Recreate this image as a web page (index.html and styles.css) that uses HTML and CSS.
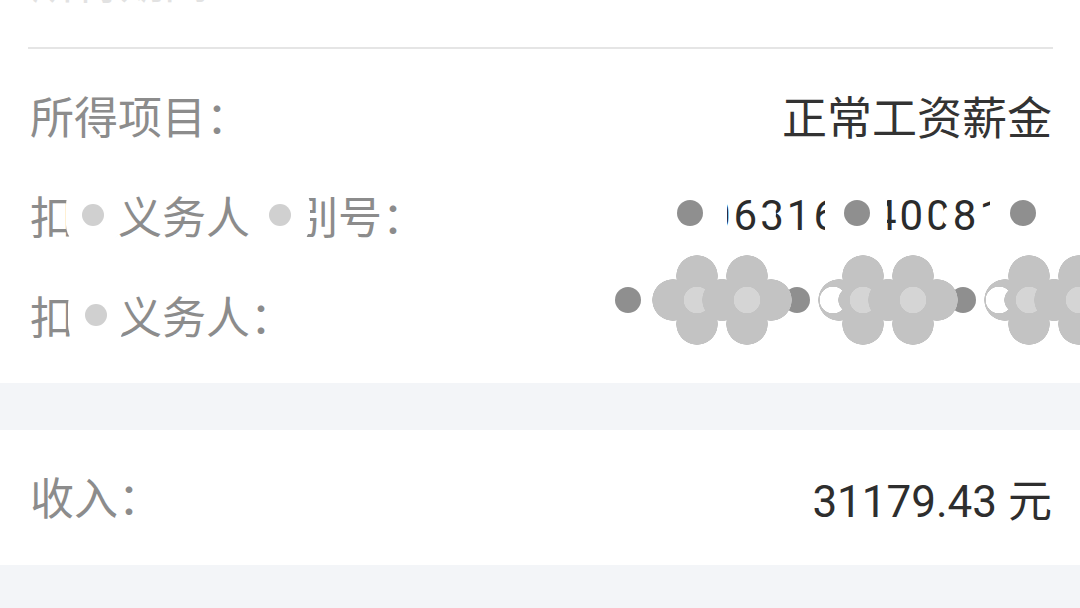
FILE: index.html
```html
<!DOCTYPE html>
<html lang="zh-CN">
<head>
  <meta charset="utf-8">
  <title>收入纳税明细</title>
  <link rel="stylesheet" href="styles.css">
</head>
<body>
  <div class="card">
    <div class="head-cut"><span>所得期间　2023-06</span></div>
    <div class="rule"></div>

    <div class="info">
      <div class="row">
        <div class="label">所得项目：</div>
        <div class="value">正常工资薪金</div>
      </div>

      <div class="row">
        <div class="label">扣缴义务人识别号：
          <span class="mask m1"><i></i></span>
          <span class="mask m2"><i></i></span>
        </div>
        <div class="id-code">
          <span class="dot"></span>
          <span class="clip c1"><b>06316</b></span>
          <span class="dot"></span>
          <span class="clip c2"><b>40081</b></span>
          <span class="dot"></span>
        </div>
      </div>

      <div class="row">
        <div class="label">扣缴义务人：
          <span class="mask m3"><i></i></span>
        </div>
        <div class="blots">
          <span class="dot d1"></span>
          <span class="dot d2"></span>
          <span class="dot d3"></span>
          <span class="flower f1"></span>
          <span class="flower f2"></span>
          <span class="flower moon f3"></span>
          <span class="flower f4"></span>
          <span class="flower moon f5"></span>
          <span class="flower f6"></span>
        </div>
      </div>
    </div>
  </div>

  <div class="gap"></div>

  <div class="card">
    <div class="row income">
      <div class="label">收入：</div>
      <div class="value num">31179.43 元</div>
    </div>
  </div>

  <div class="gap"></div>
</body>
</html>
```

FILE: styles.css
```css
html, body {
  overflow-x: hidden;
}

body {
  margin: 0;
  background: #f3f5f8;
  font-family: "Noto Sans CJK SC", sans-serif;
  color: #333;
}

.card {
  background: #fff;
}

/* the title above the rule is scrolled off the top */
.head-cut {
  height: 47px;
  overflow: hidden;
}

.head-cut span {
  display: block;
  margin-top: -42px;
  padding-left: 32px;
  font-size: 44px;
  line-height: 44px;
  color: #e2e2e2;
}

.rule {
  height: 2px;
  margin: 0 27px 0 28px;
  background: #e5e5e5;
}

.info {
  padding: 16px 0 18px;
}

.row {
  position: relative;
  height: 100px;
  display: flex;
  align-items: center;
  justify-content: space-between;
  padding: 0 28px 0 30px;
}

.label {
  position: relative;
  font-size: 44px;
  color: #8c8c8c;
  white-space: nowrap;
}

.value {
  font-size: 45px;
  color: #333;
}

.num {
  font-family: Roboto, "Noto Sans CJK SC", sans-serif;
  font-size: 44px;
  color: #2e2e2e;
}

.income {
  height: 135px;
}

.income .label {
  margin-top: -3px;
}

.gap {
  height: 47px;
}

/* privacy masks */
.mask {
  position: absolute;
  top: 0;
  bottom: 0;
  display: flex;
  align-items: center;
  justify-content: center;
  background: #fff;
  border-radius: 22px;
}

.mask i {
  width: 22px;
  height: 22px;
  border-radius: 50%;
  background: #d0d0d0;
}

.m1 { left: 36px; width: 54px; }
.m2 { left: 220px; width: 60px; }
.m3 { left: 38px; width: 56px; }

.id-code {
  display: flex;
  align-items: center;
  margin-right: 16px;
  margin-top: 2px;
}

.dot {
  width: 26px;
  height: 26px;
  border-radius: 50%;
  background: #8f8f8f;
}

.id-code .dot {
  margin-top: -6px;
}

.clip {
  position: relative;
  overflow: hidden;
  font-family: Roboto, sans-serif;
  font-size: 42px;
  letter-spacing: 3px;
  line-height: 50px;
  color: #2b2b2b;
  white-space: nowrap;
}

.clip b {
  display: block;
  font-weight: 400;
}

.clip::after {
  content: "";
  position: absolute;
  z-index: 1;
  width: 11px;
  height: 18px;
  border-radius: 50%;
  background: #fff;
}

.c1 { width: 98px; margin: 0 19px 0 24px; }
.c1 b { margin-left: -20px; }
.c1::after { left: 38px; top: 14px; }

.c2 { width: 103px; margin: 0 20px 0 17px; }
.c2 b { margin-left: -14px; }
.c2::after { left: 55px; top: 16px; }

.blots {
  position: absolute;
  left: 0;
  right: 0;
  top: -20px;
  bottom: -20px;
  overflow: hidden;
}

.blots .dot {
  position: absolute;
  top: 42px;
}

.d1 { left: 615px; }
.d2 { left: 784px; }
.d3 { left: 950px; }

.flower {
  position: absolute;
  top: 10px;
  width: 90px;
  height: 90px;
  background:
    radial-gradient(circle at 45px 45px, #d5d5d5 13px, transparent 13.5px),
    radial-gradient(circle at 45px 21px, #c3c3c3 20.5px, transparent 21px),
    radial-gradient(circle at 45px 69px, #c3c3c3 20.5px, transparent 21px),
    radial-gradient(circle at 21px 45px, #c3c3c3 20.5px, transparent 21px),
    radial-gradient(circle at 69px 45px, #c3c3c3 20.5px, transparent 21px);
}

.moon {
  background:
    radial-gradient(circle at 45px 45px, #d5d5d5 13px, transparent 13.5px),
    radial-gradient(circle at 33px 45px, #c3c3c3 12.5px, transparent 13px),
    radial-gradient(circle at 15px 45px, #fff 13px, transparent 13.5px),
    radial-gradient(circle at 45px 21px, #c3c3c3 20.5px, transparent 21px),
    radial-gradient(circle at 45px 69px, #c3c3c3 20.5px, transparent 21px),
    radial-gradient(circle at 21px 45px, #c3c3c3 20.5px, transparent 21px),
    radial-gradient(circle at 69px 45px, #c3c3c3 20.5px, transparent 21px);
}

.f1 { left: 652px; }
.f2 { left: 702px; }
.f3 { left: 818px; }
.f4 { left: 868px; }
.f5 { left: 984px; }
.f6 { left: 1034px; }
```
